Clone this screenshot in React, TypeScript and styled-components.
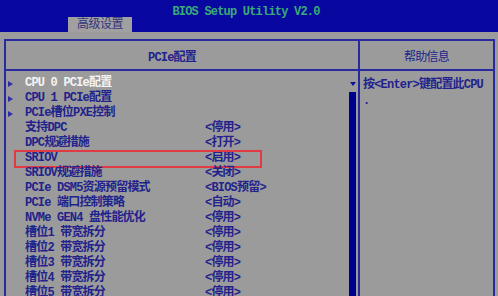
import React from "react";
import styled, { createGlobalStyle } from "styled-components";

const Global = createGlobalStyle`
  html, body { margin: 0; padding: 0; }
  body {
    width: 498px;
    height: 296px;
    overflow: hidden;
    background: #9b9b9b;
    font-family: "Liberation Mono", "Noto Sans CJK SC", monospace;
  }
`;

const Screen = styled.div`
  width: 498px;
  height: 296px;
  display: flex;
  flex-direction: column;
  background: #9b9b9b;
  overflow: hidden;
`;

const TopBar = styled.div`
  height: 32px;
  background: #0808a0;
  display: flex;
  flex-direction: column;
  box-sizing: border-box;
  padding-top: 5px;
`;

const Title = styled.div`
  text-align: center;
  padding-right: 6px;
  font-size: 12px;
  font-weight: bold;
  line-height: 14px;
  letter-spacing: -0.8px;
  color: #3aaa78;
`;

const Tab = styled.div`
  margin-top: -2px;
  margin-left: 68px;
  width: 64px;
  height: 15px;
  background: #a0a0a0;
  color: #34347c;
  font-size: 12px;
  line-height: 16px;
  text-align: center;
  letter-spacing: -0.5px;
`;

const Body = styled.div`
  flex: 1;
  padding: 7px 3px 0 4px;
  display: flex;
  min-height: 0;
`;

const Frame = styled.div`
  flex: 1;
  border: 2px solid #2a2aa0;
  border-bottom: none;
  display: grid;
  grid-template-columns: 352px 2px 1fr;
  grid-template-rows: 28px 2px 1fr;
  color: #22228c;
  font-size: 12px;
  font-weight: bold;
  letter-spacing: -0.8px;
`;

const HeadCell = styled.div<{ $shift?: number }>`
  display: flex;
  align-items: center;
  justify-content: center;
  padding-right: ${(p) => p.$shift ?? 0}px;
  padding-top: 1px;
  font-weight: ${(p) => (p.$shift ? "bold" : "normal")};
`;

const VLine = styled.div`
  background: #2a2aa0;
  grid-row: 1 / 4;
  grid-column: 2;
`;

const HLine = styled.div<{ $col: number }>`
  background: #2a2aa0;
  grid-column: ${(p) => p.$col};
`;

const LeftPane = styled.div`
  display: grid;
  grid-template-columns: 1fr 9px 1px;
  min-height: 0;
`;

const List = styled.div`
  padding-top: 5px;
  display: flex;
  flex-direction: column;
`;

const Row = styled.div<{ $boxed?: boolean; $active?: boolean }>`
  position: relative;
  display: grid;
  grid-template-columns: 17px 180px 1fr;
  padding-left: 2px;
  height: 15px;
  line-height: 15px;
  white-space: nowrap;
  color: ${(p) => (p.$active ? "#f4f4f4" : "#22228c")};
  &::after {
    content: "";
    display: ${(p) => (p.$boxed ? "block" : "none")};
    position: absolute;
    left: 8px;
    top: -1px;
    width: 248px;
    height: 18px;
    box-sizing: border-box;
    border: 2px solid #e03a44;
  }
`;

const Arrow = styled.span<{ $show?: boolean }>`
  align-self: center;
  width: 0;
  height: 0;
  border-top: 3.5px solid transparent;
  border-bottom: 3.5px solid transparent;
  border-left: 5px solid ${(p) => (p.$show ? "#2e2ea8" : "transparent")};
`;

const Label = styled.span``;
const Value = styled.span``;

const Scroll = styled.div`
  display: flex;
  flex-direction: column;
  align-items: flex-start;
  padding-left: 1px;
`;

const ScrollArrow = styled.div`
  margin-top: 11px;
  margin-left: 1px;
  width: 0;
  height: 0;
  border-left: 3px solid transparent;
  border-right: 3px solid transparent;
  border-top: 4px solid #10109a;
`;

const ScrollTrack = styled.div`
  margin-top: 6px;
  width: 7px;
  flex: 1;
  background: #00008e;
`;

const Help = styled.div`
  padding: 6px 0 0 3px;
  line-height: 16px;
  white-space: nowrap;
`;

type Item = { label: string; value?: string; sub?: boolean; active?: boolean; boxed?: boolean };

const items: Item[] = [
  { label: "CPU 0 PCIe配置", sub: true, active: true },
  { label: "CPU 1 PCIe配置", sub: true },
  { label: "PCIe槽位PXE控制", sub: true },
  { label: "支持DPC", value: "<停用>" },
  { label: "DPC规避措施", value: "<打开>" },
  { label: "SRIOV", value: "<启用>", boxed: true },
  { label: "SRIOV规避措施", value: "<关闭>" },
  { label: "PCIe DSM5资源预留模式", value: "<BIOS预留>" },
  { label: "PCIe 端口控制策略", value: "<自动>" },
  { label: "NVMe GEN4 盘性能优化", value: "<停用>" },
  { label: "槽位1 带宽拆分", value: "<停用>" },
  { label: "槽位2 带宽拆分", value: "<停用>" },
  { label: "槽位3 带宽拆分", value: "<停用>" },
  { label: "槽位4 带宽拆分", value: "<停用>" },
  { label: "槽位5 带宽拆分", value: "<停用>" },
];

export default function App() {
  return (
    <Screen>
      <Global />
      <TopBar>
        <Title>BIOS Setup Utility V2.0</Title>
        <Tab>高级设置</Tab>
      </TopBar>
      <Body>
        <Frame>
          <HeadCell $shift={20}>PCIe配置</HeadCell>
          <VLine />
          <HeadCell>帮助信息</HeadCell>
          <HLine $col={1} />
          <HLine $col={3} />
          <LeftPane>
            <List>
              {items.map((it) => (
                <Row key={it.label} $active={it.active} $boxed={it.boxed}>
                  <Arrow $show={it.sub} />
                  <Label>{it.label}</Label>
                  <Value>{it.value ?? ""}</Value>
                </Row>
              ))}
            </List>
            <Scroll>
              <ScrollArrow />
              <ScrollTrack />
            </Scroll>
          </LeftPane>
          <Help>
            按&lt;Enter&gt;键配置此CPU
            <br />.
          </Help>
        </Frame>
      </Body>
    </Screen>
  );
}
